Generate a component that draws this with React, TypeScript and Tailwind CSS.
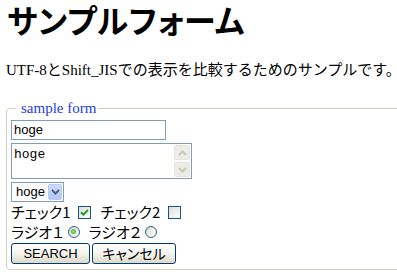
const jp = "font-['Noto_Sans_CJK_JP',sans-serif] [font-feature-settings:'palt']"

const CheckBox = ({ checked }: { checked?: boolean }) => (
  <span className="flex h-[13px] w-[13px] items-center justify-center border border-[#1c5180] bg-linear-to-br from-[#dcdcd7] to-white">
    {checked && (
      <svg width="9" height="9" viewBox="0 0 9 9">
        <path d="M1 4.2 L3.4 6.6 L8 2" stroke="#21a121" strokeWidth="2" fill="none" />
      </svg>
    )}
  </span>
)

const Radio = ({ checked }: { checked?: boolean }) => (
  <span className="flex h-[12px] w-[12px] items-center justify-center rounded-full border border-[#2c628b] bg-linear-to-br from-[#d8d8d2] to-white">
    {checked && <span className="h-[5px] w-[5px] rounded-full bg-[radial-gradient(circle,#9be887,#2b9a1c)]" />}
  </span>
)

const Chevron = ({ up, color }: { up?: boolean; color: string }) => (
  <svg width="9" height="6" viewBox="0 0 9 6">
    <path d={up ? 'M1 5 L4.5 1.5 L8 5' : 'M1 1 L4.5 4.5 L8 1'} stroke={color} strokeWidth="2" fill="none" />
  </svg>
)

const XpButton = ({ width, children, font }: { width: string; children: string; font: string }) => (
  <button
    type="button"
    className={`${width} ${font} flex h-[21px] items-center justify-center rounded-[3px] border border-[#003c74] bg-linear-to-b from-white via-[#f5f4ee] to-[#dcd9c9] text-black`}
  >
    {children}
  </button>
)

export default function App() {
  return (
    <div className="h-[280px] w-[397px] overflow-hidden bg-white text-black">
      <h1 className={`ml-[7px] pt-[3px] text-[32px] leading-[32px] font-bold tracking-[0.5px] ${jp}`}>サンプルフォーム</h1>
      <p className="ml-[6px] mt-[25px] text-[15px] leading-[20px] whitespace-nowrap font-['Liberation_Serif','Noto_Sans_CJK_JP',serif]">
        UTF-8とShift_JISでの表示を比較するためのサンプルです。
      </p>

      <fieldset className="ml-[6px] mt-[20px] w-[400px] rounded-[4px] border border-[#d0d0bf] pl-[4px] pb-[5px]">
        <legend className="ml-[5px] pl-[5px] pr-[2px] text-[15px] leading-[17px] text-[#1e40e0] font-['Liberation_Serif',serif]">
          sample form
        </legend>

        {/* text input */}
        <div className="mt-[3px] flex h-[20px] w-[155px] items-center border border-[#7f9db9] pl-[2px] text-[13px] font-['Liberation_Sans',sans-serif]">
          hoge
        </div>

        {/* textarea */}
        <div className="mt-[3px] flex h-[36px] w-[181px] border border-[#7f9db9]">
          <div className="flex-1 pl-[2px] pt-[3px] text-[13px] leading-[15px] font-['Liberation_Mono',monospace]">hoge</div>
          <div className="flex w-[17px] flex-col gap-[2px] py-[1px] pr-[1px]">
            <span className="flex flex-1 items-center justify-center rounded-[2px] border border-[#e6e4da] bg-[#eeede5]">
              <Chevron up color="#c8c6b8" />
            </span>
            <span className="flex flex-1 items-center justify-center rounded-[2px] border border-[#e6e4da] bg-[#eeede5]">
              <Chevron color="#c8c6b8" />
            </span>
          </div>
        </div>

        {/* select */}
        <div className="mt-[3px] flex h-[20px] w-[53px] border border-[#7f9db9] p-[1px]">
          <span className="flex flex-1 items-center pl-[3px] text-[13px] font-['Liberation_Sans',sans-serif]">hoge</span>
          <span className="flex w-[14px] items-center justify-center rounded-[2px] border border-[#b9cbf3] bg-linear-to-b from-[#cddcfc] to-[#b3c7f3]">
            <Chevron color="#4d6185" />
          </span>
        </div>

        {/* checkboxes */}
        <div className={`flex h-[20px] items-center text-[15px] leading-[20px] ${jp}`}>
          <span>チェック1</span>
          <span className="ml-[7px]"><CheckBox checked /></span>
          <span className="ml-[10px]">チェック2</span>
          <span className="ml-[8px]"><CheckBox /></span>
        </div>

        {/* radios */}
        <div className={`flex h-[19px] items-center text-[15px] leading-[19px] ${jp}`}>
          <span>ラジオ１</span>
          <span className="ml-[4px]"><Radio checked /></span>
          <span className="ml-[9px]">ラジオ２</span>
          <span className="ml-[4px]"><Radio /></span>
        </div>

        {/* buttons */}
        <div className="mt-[2px] flex gap-[2px]">
          <XpButton width="w-[79px]" font="text-[13px] font-['Liberation_Sans',sans-serif]">SEARCH</XpButton>
          <XpButton width="w-[84px]" font={`text-[14px] ${jp}`}>キャンセル</XpButton>
        </div>
      </fieldset>
    </div>
  )
}
